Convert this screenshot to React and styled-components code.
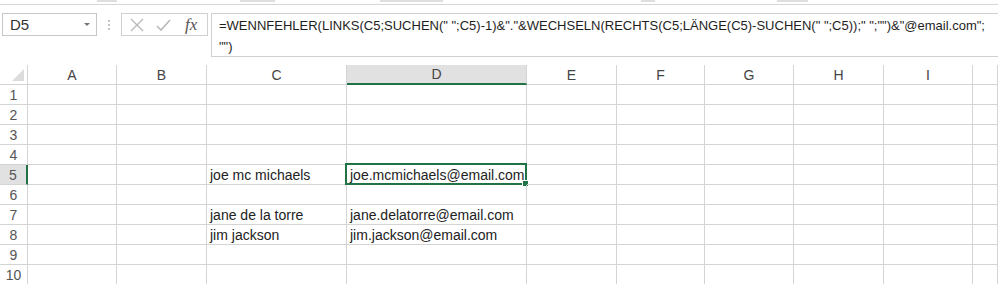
import React from 'react'
import styled, { createGlobalStyle } from 'styled-components'

const GlobalStyle = createGlobalStyle`
  html, body {
    margin: 0;
    padding: 0;
    background: #ffffff;
    overflow: hidden;
  }
  body {
    font-family: "Liberation Sans", Arial, sans-serif;
  }
`;

const Page = styled.div`
  width: 998px;
  height: 284px;
  overflow: hidden;
  background: #ffffff;
`;

const Ribbon = styled.div`
  height: 4px;
  border-bottom: 1px solid #d6d6d6;
  display: flex;
  overflow: hidden;
`;

const RibbonLabel = styled.span`
  margin-left: ${p => p.$gap}px;
  width: ${p => p.$w}px;
  height: 2px;
  background: #c8c8c8;
  opacity: 0.6;
`;

const FormulaBar = styled.div`
  display: flex;
  align-items: flex-start;
  padding: 8px 0 8px 2px;
  height: 44px;
`;

const NameBox = styled.div`
  width: 95px;
  height: 23px;
  box-sizing: border-box;
  border: 1px solid #c6c6c6;
  display: flex;
  align-items: center;
  justify-content: space-between;
  padding: 0 6px 0 7px;
  font-size: 15px;
  color: #333;
`;

const Caret = styled.span`
  width: 0;
  height: 0;
  border-left: 3px solid transparent;
  border-right: 3px solid transparent;
  border-top: 3px solid #777;
`;

const Grip = styled.div`
  width: 24px;
  height: 23px;
  display: flex;
  flex-direction: column;
  align-items: center;
  justify-content: center;
  gap: 2px;
  span {
    width: 2px;
    height: 2px;
    background: #c4c4c4;
  }
`;

const ButtonBox = styled.div`
  width: 87px;
  height: 23px;
  box-sizing: border-box;
  border: 1px solid #d0d0d0;
  display: flex;
  align-items: center;
  padding: 0 6px 0 8px;
  gap: 12px;
`;

const FxLabel = styled.span`
  font-family: "Liberation Serif", "Times New Roman", serif;
  font-style: italic;
  font-size: 17px;
  color: #555;
  margin-left: 2px;
`;

const FormulaInput = styled.div`
  margin-left: 3px;
  flex: 1;
  height: 44px;
  box-sizing: border-box;
  border: 1px solid #d0d0d0;
  border-right: none;
  padding: 1px 0 0 7px;
  font-size: 13px;
  line-height: 21px;
  color: #1e1e1e;
  white-space: nowrap;
  overflow: hidden;
`;

const Sheet = styled.div`
  display: grid;
  grid-template-columns: 28px 89px 90px 140px 180px 90px 88px 89px 90px 89px 1fr;
  grid-auto-rows: 20px;
`;

const Corner = styled.div`
  box-sizing: border-box;
  border-right: 1px solid #d4d4d4;
  border-bottom: 1px solid #d4d4d4;
  display: flex;
  align-items: flex-end;
  justify-content: flex-end;
  padding: 0 3px 3px 0;
`;

const ColHead = styled.div`
  box-sizing: border-box;
  border-right: 1px solid #d4d4d4;
  border-bottom: ${p => (p.$active ? '2px solid #217346' : '1px solid #d4d4d4')};
  background: ${p => (p.$active ? '#e1e1e1' : '#ffffff')};
  display: flex;
  align-items: center;
  justify-content: center;
  font-size: 14px;
  color: #444;
`;

const RowHead = styled.div`
  box-sizing: border-box;
  border-right: ${p => (p.$active ? '2px solid #217346' : '1px solid #d4d4d4')};
  border-bottom: 1px solid #d4d4d4;
  background: ${p => (p.$active ? '#e1e1e1' : '#ffffff')};
  display: flex;
  align-items: center;
  justify-content: center;
  font-size: 14px;
  color: #555;
`;

const Cell = styled.div`
  position: relative;
  box-sizing: border-box;
  border-right: 1px solid #d4d4d4;
  border-bottom: 1px solid #d4d4d4;
  display: flex;
  align-items: center;
  padding-left: 3px;
  font-size: 14px;
  color: #222;
  white-space: nowrap;
`;

const Selection = styled.div`
  position: absolute;
  left: -2px;
  top: -2px;
  right: -1px;
  bottom: -1px;
  border: 2px solid #217346;
  pointer-events: none;
`;

const FillHandle = styled.span`
  position: absolute;
  right: -4px;
  bottom: -4px;
  width: 5px;
  height: 5px;
  background: #217346;
  border: 1px solid #ffffff;
`;

const columns = ['A', 'B', 'C', 'D', 'E', 'F', 'G', 'H', 'I', '']

const data = {
  5: { C: 'joe mc michaels', D: 'joe.mcmichaels@email.com' },
  7: { C: 'jane de la torre', D: 'jane.delatorre@email.com' },
  8: { C: 'jim jackson', D: 'jim.jackson@email.com' },
}

const active = { row: 5, col: 'D' }

const CancelIcon = () => (
  <svg width="14" height="14" viewBox="0 0 14 14">
    <path d="M1 1 L13 13 M13 1 L1 13" stroke="#b9b9b9" strokeWidth="1.4" fill="none" />
  </svg>
)

const CheckIcon = () => (
  <svg width="15" height="14" viewBox="0 0 15 14">
    <path d="M1 8 L5 12 L14 2" stroke="#b9b9b9" strokeWidth="1.6" fill="none" />
  </svg>
)

const App = () => {
  const rows = Array.from({ length: 10 }, (_, i) => i + 1)
  return (
    <Page>
      <GlobalStyle />
      <Ribbon>
        <RibbonLabel $gap={97} $w={20} />
        <RibbonLabel $gap={123} $w={35} />
        <RibbonLabel $gap={105} $w={63} />
        <RibbonLabel $gap={198} $w={14} />
        <RibbonLabel $gap={122} $w={31} />
      </Ribbon>
      <FormulaBar>
        <NameBox>
          D5
          <Caret />
        </NameBox>
        <Grip>
          <span />
          <span />
          <span />
        </Grip>
        <ButtonBox>
          <CancelIcon />
          <CheckIcon />
          <FxLabel>fx</FxLabel>
        </ButtonBox>
        <FormulaInput>
          =WENNFEHLER(LINKS(C5;SUCHEN(" ";C5)-1)&amp;"."&amp;WECHSELN(RECHTS(C5;LÄNGE(C5)-SUCHEN(" ";C5));" ";"")&amp;"@email.com";
          <br />
          "")
        </FormulaInput>
      </FormulaBar>
      <Sheet>
        <Corner>
          <svg width="12" height="12" viewBox="0 0 12 12">
            <path d="M12 0 L12 12 L0 12 Z" fill="#dcdcdc" />
          </svg>
        </Corner>
        {columns.map(c => (
          <ColHead key={c || 'J'} $active={c === active.col}>{c}</ColHead>
        ))}
        {rows.map(r => (
          <React.Fragment key={r}>
            <RowHead $active={r === active.row}>{r}</RowHead>
            {columns.map(c => (
              <Cell key={c || 'J'}>
                {data[r]?.[c]}
                {r === active.row && c === active.col && (
                  <Selection>
                    <FillHandle />
                  </Selection>
                )}
              </Cell>
            ))}
          </React.Fragment>
        ))}
      </Sheet>
    </Page>
  )
}

export default App
